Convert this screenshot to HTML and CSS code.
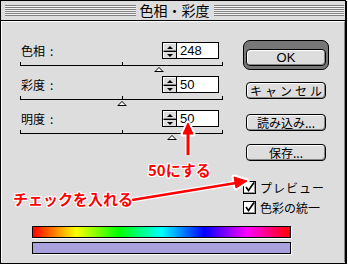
FILE: index.html
```html
<!DOCTYPE html>
<html lang="ja">
<head>
  <meta charset="UTF-8">
  <title>色相・彩度</title>
  <link rel="stylesheet" href="styles.css">
</head>
<body>
  <div class="window">
    <div class="titlebar">
      <span class="stripes"></span>
      <span class="title">色相・彩度</span>
      <span class="stripes"></span>
    </div>
    <div class="panel">
      <div class="main">
        <div class="sliders">
          <div class="slider">
            <div class="slider-head">
              <span class="label">色相<span class="colon">:</span></span>
              <div class="spin">
                <div class="arrows">
                  <span class="step up"></span>
                  <span class="step down"></span>
                </div>
                <div class="field">248</div>
              </div>
            </div>
            <div class="track"><span class="thumb" style="left: 68.9%"></span></div>
          </div>
          <div class="slider">
            <div class="slider-head">
              <span class="label">彩度<span class="colon">:</span></span>
              <div class="spin">
                <div class="arrows">
                  <span class="step up"></span>
                  <span class="step down"></span>
                </div>
                <div class="field">50</div>
              </div>
            </div>
            <div class="track"><span class="thumb" style="left: 50%"></span></div>
          </div>
          <div class="slider">
            <div class="slider-head">
              <span class="label">明度<span class="colon">:</span></span>
              <div class="spin">
                <div class="arrows">
                  <span class="step up"></span>
                  <span class="step down"></span>
                </div>
                <div class="field">50</div>
              </div>
            </div>
            <div class="track"><span class="thumb" style="left: 75%"></span></div>
          </div>
        </div>

        <div class="side">
          <div class="default-ring"><button class="btn btn-ok">OK</button></div>
          <button class="btn btn-cancel">キャンセル</button>
          <button class="btn btn-load">読み込み...</button>
          <button class="btn btn-save">保存...</button>
          <label class="check check-preview">
            <span class="box"><svg width="11" height="11" viewBox="0 0 11 11"><path d="M2 5 L4.5 8.5 L10 0.5" fill="none" stroke="#000" stroke-width="1.6"/></svg></span>
            プレビュー
          </label>
          <label class="check">
            <span class="box"><svg width="11" height="11" viewBox="0 0 11 11"><path d="M2 5 L4.5 8.5 L10 0.5" fill="none" stroke="#000" stroke-width="1.6"/></svg></span>
            色彩の統一
          </label>
        </div>
      </div>

      <div class="bars">
        <div class="bar spectrum"></div>
        <div class="bar result"></div>
      </div>
    </div>

    <!-- red notes drawn over the dialog -->
    <div class="notes">
      <svg class="arrows-layer" width="348" height="264" viewBox="0 0 348 264">
        <g stroke="#fff" stroke-width="5" fill="#fff" stroke-linejoin="round">
          <line x1="188" y1="155" x2="188" y2="132"/>
          <polygon points="188,123 183,134 193,134"/>
          <line x1="132" y1="200" x2="236" y2="183"/>
          <polygon points="247,181 234,177 236,188"/>
        </g>
        <g stroke="#f00" fill="#f00">
          <line x1="188" y1="155" x2="188" y2="132" stroke-width="3"/>
          <polygon points="188,123 183,134 193,134" stroke-width="1"/>
          <line x1="132" y1="200" x2="236" y2="183" stroke-width="2.5"/>
          <polygon points="247,181 234,177 236,188" stroke-width="1"/>
        </g>
      </svg>
      <span class="note note-50">50にする</span>
      <span class="note note-check">チェックを入れる</span>
    </div>
  </div>
</body>
</html>
```

FILE: styles.css
```css
body {
  margin: 0;
  background: #fff;
  font-family: "Noto Sans CJK JP", "Liberation Sans", sans-serif;
}
.window {
  position: relative;
  width: 344px;
  height: 262px;
  border: 1px solid #000;
  background: #dddddd;
  box-shadow: 1px 1px 0 #000;
}
.titlebar {
  display: flex;
  align-items: center;
  height: 19px;
  border-bottom: 1px solid #000;
  padding: 0 1px 0 4px;
  gap: 3px;
}
.stripes {
  flex: 1;
  height: 11px;
  background: repeating-linear-gradient(#808080 0 1px, #f4f4f4 1px 2px);
}
.title {
  font-size: 14px;
  line-height: 19px;
  padding: 0 1px;
}
.panel {
  height: 240px;
  border-top: 1px solid #fff;
  border-left: 1px solid #fff;
  border-right: 1px solid #888;
}
.main {
  display: flex;
  gap: 20px;
  padding-left: 18px;
}
.sliders {
  width: 203px;
  padding-top: 20px;
}
.slider {
  height: 34px;
}
.slider-head {
  display: flex;
  justify-content: space-between;
  align-items: center;
  height: 17px;
}
.label {
  font-size: 12px;
  padding-left: 1px;
}
.colon {
  margin-left: 5px;
}
.spin {
  display: flex;
  margin-right: 4px;
  height: 17px;
}
.arrows {
  display: flex;
  flex-direction: column;
  width: 13px;
  border: 1px solid #000;
  border-right: none;
}
.step {
  flex: 1;
  position: relative;
  background: #ddd;
  border-top: 1px solid #fff;
  border-left: 1px solid #fff;
  border-bottom: 1px solid #888;
}
.step.down {
  border-bottom: none;
  border-top: 1px solid #000;
}
.step::after {
  content: "";
  position: absolute;
  left: 3px;
  top: 2px;
  border-left: 3px solid transparent;
  border-right: 3px solid transparent;
}
.step.up::after {
  border-bottom: 3px solid #000;
}
.step.down::after {
  border-top: 3px solid #000;
}
.field {
  width: 38px;
  border: 1px solid #000;
  background: #fff;
  font-family: "Liberation Sans", sans-serif;
  font-size: 13px;
  line-height: 15px;
  padding-left: 3px;
}
.track {
  position: relative;
  margin-top: 3px;
  height: 3px;
  border: 1px solid #000;
  border-top: none;
}
.track::after {
  content: "";
  position: absolute;
  left: 50%;
  top: 0;
  width: 1px;
  height: 3px;
  background: #000;
}
.thumb {
  position: absolute;
  top: 5px;
  margin-left: -5px;
  border-left: 5px solid transparent;
  border-right: 5px solid transparent;
  border-bottom: 5px solid #000;
}
.thumb::after {
  content: "";
  position: absolute;
  left: -3px;
  top: 1px;
  border-left: 3px solid transparent;
  border-right: 3px solid transparent;
  border-bottom: 3px solid #fff;
}
.side {
  display: flex;
  flex-direction: column;
  align-items: flex-start;
  width: 86px;
  padding-top: 18px;
}
.default-ring {
  border: 1px solid #000;
  border-radius: 7px;
  padding: 2px;
  background: #777;
}
.btn {
  width: 80px;
  height: 17px;
  padding: 0;
  border: 1px solid #000;
  border-radius: 4px;
  background: #ddd;
  box-shadow: inset 1px 1px 0 #fff, inset -1px -1px 0 #888;
  font-family: "Noto Sans CJK JP", sans-serif;
  font-size: 12px;
  line-height: 15px;
  color: #000;
}
.btn-ok {
  font-family: "Liberation Sans", sans-serif;
  font-size: 13px;
}
.btn-cancel {
  margin: 12px 0 0 3px;
  letter-spacing: 3px;
  padding-left: 3px;
}
.btn-load {
  margin: 15px 0 0 3px;
}
.btn-save {
  margin: 13px 0 0 3px;
}
.check {
  display: flex;
  align-items: center;
  gap: 4px;
  font-size: 12px;
  height: 12px;
  margin-top: 8px;
}
.check-preview {
  margin-top: 20px;
  letter-spacing: 1px;
}
.box {
  width: 11px;
  height: 11px;
  border: 1px solid #000;
  background: #fff;
  box-shadow: inset -1px -1px 0 #999;
}
.box svg {
  display: block;
}
.bars {
  display: flex;
  flex-direction: column;
  gap: 4px;
  margin: 13px 0 0 30px;
}
.bar {
  width: 257px;
  height: 10px;
  border: 1px solid #000;
  box-shadow: 1px 1px 0 #fff;
}
.spectrum {
  background: linear-gradient(to right, #f00, #ff0, #0f0, #0ff, #00f, #f0f, #f00);
}
.result {
  background: #a9a1dd;
}
.notes {
  position: absolute;
  left: -1px;
  top: -1px;
  width: 348px;
  height: 264px;
  pointer-events: none;
}
.arrows-layer {
  position: absolute;
  left: 0;
  top: 0;
}
.note {
  position: absolute;
  color: #f00;
  font-weight: bold;
  font-size: 15px;
  line-height: 18px;
  text-shadow: 1px 0 #fff, -1px 0 #fff, 0 1px #fff, 0 -1px #fff,
    1px 1px #fff, -1px -1px #fff, 1px -1px #fff, -1px 1px #fff;
}
.note-50 {
  left: 148px;
  top: 161px;
}
.note-check {
  left: 13px;
  top: 190px;
}
```
